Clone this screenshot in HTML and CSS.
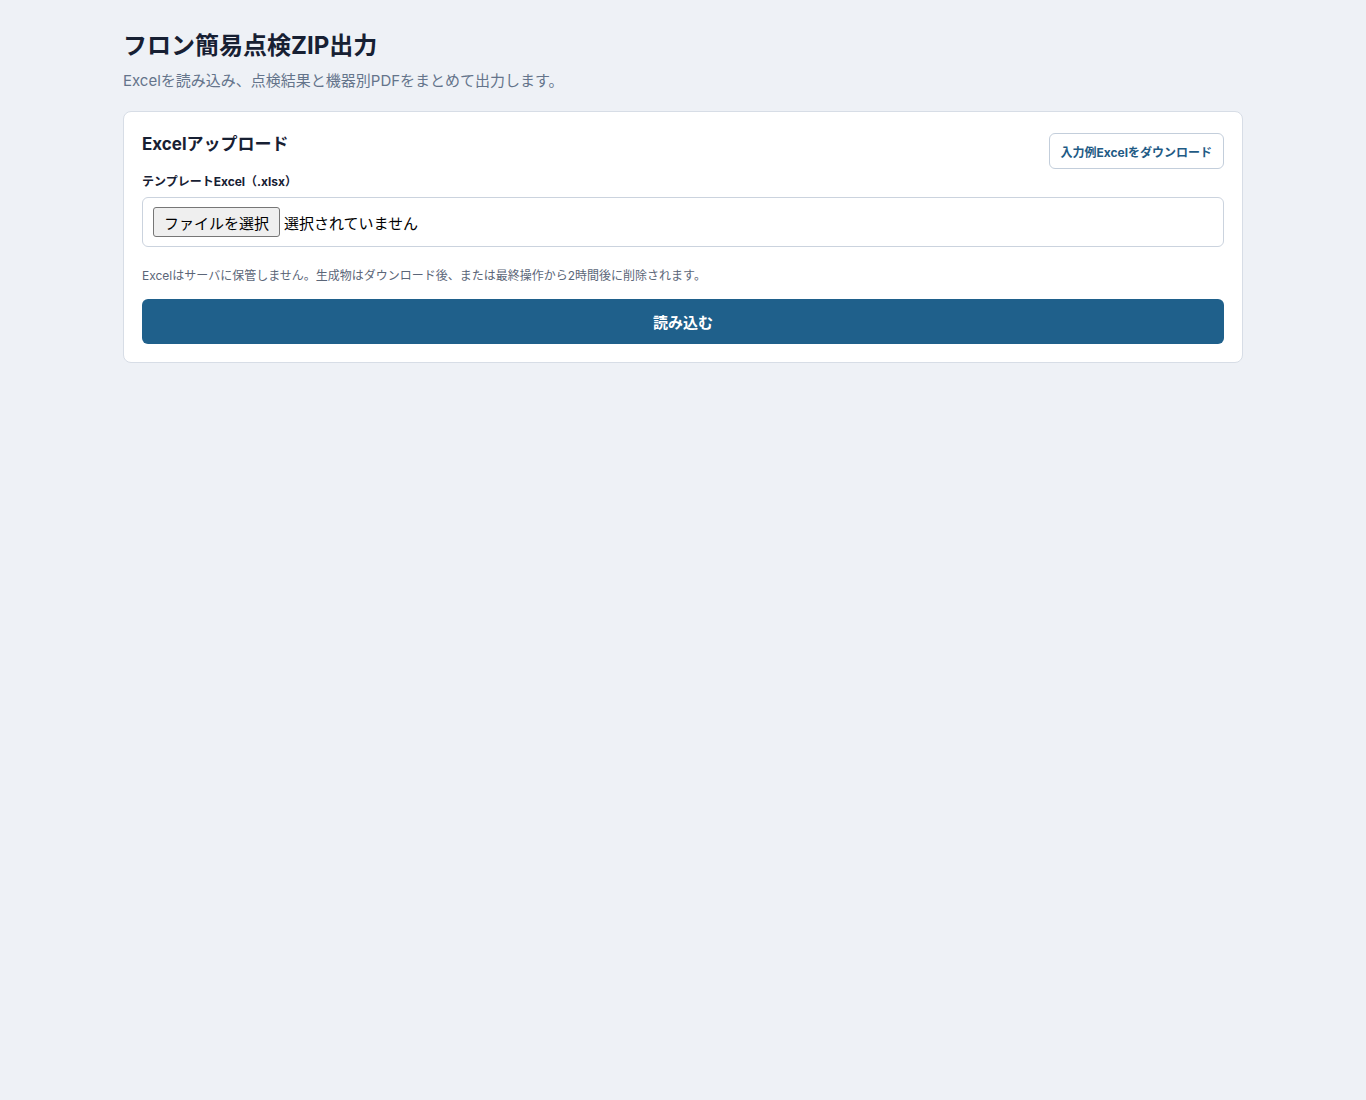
FILE: index.html
```html
<!DOCTYPE html>
<html lang="ja">
<head>
<meta charset="utf-8">
<title>フロン簡易点検ZIP出力</title>
<link rel="stylesheet" href="styles.css">
</head>
<body>
<main class="page">
  <header class="page-head">
    <h1 class="page-title">フロン簡易点検ZIP出力</h1>
    <p class="page-sub">Excelを読み込み、点検結果と機器別PDFをまとめて出力します。</p>
  </header>
  <section class="card">
    <div class="card-head">
      <h2 class="card-title">Excelアップロード</h2>
      <button class="btn-outline" type="button">入力例Excelをダウンロード</button>
    </div>
    <label class="field-label" for="file">テンプレートExcel（.xlsx）</label>
    <div class="file-box">
      <input id="file" class="file-input" type="file" accept=".xlsx">
      <label class="file-btn" for="file">ファイルを選択</label>
      <span class="file-name">選択されていません</span>
    </div>
    <p class="note">Excelはサーバに保管しません。生成物はダウンロード後、または最終操作から2時間後に削除されます。</p>
    <button class="btn-primary" type="button">読み込む</button>
  </section>
</main>
</body>
</html>
```

FILE: styles.css
```css
* { box-sizing: border-box; }
html, body {
  margin: 0;
  padding: 0;
  background: #eef1f6;
  font-family: "Inter", "Noto Sans CJK JP", sans-serif;
  color: #172033;
}
.page {
  max-width: 1120px;
  margin: 0 auto;
  padding: 31px 0 40px;
}
.page-title {
  margin: 0;
  font-size: 24px;
  line-height: 30px;
  font-weight: 700;
  color: #172033;
}
.page-sub {
  margin: 9px 0 0;
  font-size: 15px;
  line-height: 22px;
  color: #64748b;
}
.card {
  margin-top: 19px;
  background: #ffffff;
  border: 1px solid #d7dde6;
  border-radius: 8px;
  padding: 18px;
}
.card-head {
  display: flex;
  justify-content: space-between;
  align-items: flex-start;
}
.card-title {
  margin: 0;
  font-size: 17px;
  line-height: 28px;
  font-weight: 700;
  color: #172033;
}
.btn-outline {
  margin-top: 3px;
  height: 36px;
  padding: 0 11px;
  background: #ffffff;
  border: 1px solid #c3cedb;
  border-radius: 6px;
  font-family: inherit;
  font-size: 12px;
  font-weight: 700;
  color: #1f5b85;
  cursor: pointer;
}
.field-label {
  display: block;
  margin-top: 4px;
  font-size: 12px;
  line-height: 18px;
  font-weight: 700;
  color: #172033;
}
.file-box {
  margin-top: 6px;
  height: 50px;
  display: flex;
  align-items: center;
  padding: 0 10px;
  border: 1px solid #cbd3de;
  border-radius: 6px;
}
.file-input {
  position: absolute;
  width: 1px;
  height: 1px;
  opacity: 0;
  overflow: hidden;
}
.file-btn {
  display: inline-flex;
  align-items: center;
  height: 30px;
  padding: 0 10px;
  background: #efefef;
  border: 1px solid #767676;
  border-radius: 3px;
  font-size: 15px;
  color: #000000;
  cursor: pointer;
}
.file-name {
  margin-left: 4px;
  font-size: 15px;
  color: #000000;
}
.note {
  margin: 20px 0 0;
  font-size: 12px;
  line-height: 18px;
  color: #5b6678;
}
.btn-primary {
  display: block;
  width: 100%;
  margin-top: 14px;
  height: 45px;
  border: none;
  border-radius: 6px;
  background: #1f608b;
  color: #ffffff;
  font-family: inherit;
  font-size: 15px;
  font-weight: 700;
  cursor: pointer;
}
```
